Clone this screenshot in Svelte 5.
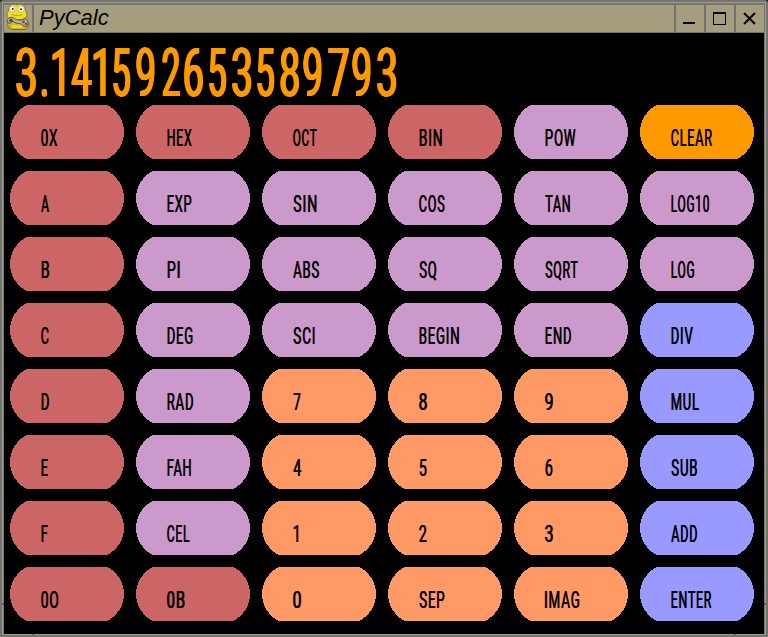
<script>
  // each glyph of the readout with its left edge and width on the display
  const readout = [
    ['3', 17.2, 18.8], ['.', 42.2, 5.2], ['1', 53, 11.5], ['4', 72.1, 19.6], ['1', 94.1, 11.7],
    ['5', 114, 16.2], ['9', 136.8, 17.5], ['2', 162.6, 16.6], ['6', 185, 17.8], ['5', 209.8, 16.2],
    ['3', 233.3, 18.2], ['5', 258, 16.2], ['8', 281.5, 18.2], ['9', 304.3, 17.5], ['7', 329, 19.3],
    ['9', 352.8, 17.5], ['3', 377.8, 18.2],
  ];

  // label, colour, label width
  const keys = [
    ['0X', 'red', 17], ['HEX', 'red', 25], ['OCT', 'red', 24], ['BIN', 'red', 23], ['POW', 'lilac', 31], ['CLEAR', 'amber', 41.5],
    ['A', 'red', 8.5], ['EXP', 'lilac', 24.5], ['SIN', 'lilac', 23.5], ['COS', 'lilac', 26], ['TAN', 'lilac', 25], ['LOG10', 'lilac', 38],
    ['B', 'red', 8.5], ['PI', 'lilac', 13], ['ABS', 'lilac', 26.5], ['SQ', 'lilac', 17.5], ['SQRT', 'lilac', 33], ['LOG', 'lilac', 23.5],
    ['C', 'red', 8], ['DEG', 'lilac', 26], ['SCI', 'lilac', 22], ['BEGIN', 'lilac', 40], ['END', 'lilac', 26.5], ['DIV', 'blue', 22],
    ['D', 'red', 8.5], ['RAD', 'lilac', 26.5], ['7', 'peach', 8], ['8', 'peach', 8], ['9', 'peach', 8], ['MUL', 'blue', 28.5],
    ['E', 'red', 7], ['FAH', 'lilac', 24], ['4', 'peach', 8.5], ['5', 'peach', 8], ['6', 'peach', 8], ['SUB', 'blue', 26.5],
    ['F', 'red', 7], ['CEL', 'lilac', 23], ['1', 'peach', 5.5], ['2', 'peach', 8], ['3', 'peach', 8], ['ADD', 'blue', 26.5],
    ['0O', 'red', 17.5], ['0B', 'red', 18], ['0', 'peach', 8], ['SEP', 'peach', 25.5], ['IMAG', 'peach', 34.5], ['ENTER', 'blue', 41],
  ];

  // squeeze a glyph run so that its ink starts at the left edge and fills the width
  function squeeze(node, width) {
    const ctx = document.createElement('canvas').getContext('2d');
    const style = getComputedStyle(node);
    ctx.font = `${style.fontWeight} ${style.fontSize} Roboto`;
    if (node.textContent.length > 1) ctx.letterSpacing = style.letterSpacing;
    const m = ctx.measureText(node.textContent);
    const ink = m.actualBoundingBoxRight + m.actualBoundingBoxLeft + 1;
    node.style.transform = `scaleX(${width / ink}) translateX(${m.actualBoundingBoxLeft}px)`;
  }
</script>

<div class="window">
  <header>
    <svg class="snake" width="28" height="27" viewBox="0 0 28 27">
      <path d="M6 13C2 17 3 25 8 25.500h12c4 0 6-5 3-8l-4-3z" fill="#cdb91d" stroke="#786b32" />
      <path d="M5 5c0-4 4-6 8-4 4-2 8 0 8 4l2 5c0 4-4 6-10 6S3 15 3 11c0-2 1-3 2-6z" fill="#f3dc20" stroke="#7d712c" stroke-width=".9" />
      <circle cx="8.300" cy="4.800" r="2.800" fill="#fff" stroke="#999" stroke-width=".5" /><circle cx="17.200" cy="5" r="3" fill="#fff" stroke="#999" stroke-width=".5" />
      <circle cx="8.800" cy="5" r="1" fill="#222" /><circle cx="17" cy="5.300" r="1" fill="#222" />
      <path d="M8 10.500c3 1.500 7 1.500 10 0" stroke="#b09a1a" fill="none" />
      <path d="M5 14c4-2 5 1 9 2s5-1 7-1c3 0 4.500 7 1.500 7.500-3 1-4-3-7-3s-4-1-6-2-3 3-5 1.500c-2-1-1.500-4 .5-5z" fill="#b5b5b0" stroke="#4d4d4d" />
      <path d="M5 16.500h4M7 14.500v4" stroke="#444" stroke-width="1.300" />
      <circle cx="19.500" cy="18" r="1.300" fill="#b82020" /><circle cx="22" cy="20" r="1.300" fill="#b82020" />
      <path d="M8 22.500h10" stroke="#f3dc20" stroke-width="2.500" />
    </svg>
    <h1>PyCalc</h1>
    <button aria-label="Minimize"><svg width="28" height="26" shape-rendering="crispEdges"><path d="M7 16h12v2H7z" /></svg></button>
    <button aria-label="Maximize"><svg width="28" height="26" shape-rendering="crispEdges"><path d="M7 6h13v13H7zM8 8v10h11V8z" fill-rule="evenodd" /></svg></button>
    <button aria-label="Close"><svg width="28" height="26"><path d="M8 7l11 11M19 7l-11 11" stroke="#000" stroke-width="2" /></svg></button>
  </header>
  <main>
    <div class="display">
      {#each readout as [glyph, left, width], i}
        <span class="cell" style:width="{(readout[i + 1]?.[1] ?? left + 24) - left}px"><span class="digit" use:squeeze={width}>{glyph}</span></span>
      {/each}
    </div>
    <div class="keys">
      {#each keys as [label, colour, width]}
        <button class="key {colour}">
          <svg width="114" height="54" shape-rendering="crispEdges"><rect y="-3" width="114" height="60" rx="30" /></svg>
          <span class="label" use:squeeze={width}>{label}</span>
        </button>
      {/each}
    </div>
  </main>
  <i class="notch left"></i><i class="notch right"></i><i class="notch sw"></i><i class="notch se"></i>
</div>

<style>
  :global(body) { margin: 0; background: #000; }
  button { border: 0; margin: 0; padding: 0; background: none; }
  .window {
    position: relative; box-sizing: border-box; width: 768px; height: 637px;
    background: #a59e7e; border: 2px solid #737373;
    border-radius: 3px 3px 0 0; padding: 1px;
    display: flex; flex-direction: column; overflow: hidden;
  }
  header {
    flex: none; height: 27px; display: flex; align-items: stretch;
    border: 1px solid #737373; border-top-width: 2px;
  }
  header .snake { display: block; flex: none; margin-top: -1px; }
  h1 {
    flex: 1; margin: 0; padding-left: 5px; border-left: 2px solid #737373;
    font: italic 400 22px/26px "Liberation Sans", Arial, sans-serif; color: #000;
  }
  header button { flex: none; width: 30px; box-sizing: border-box; border-left: 2px solid #737373; }
  header button svg { display: block; }
  main { flex: 1; background: #000; border: 1px solid #737373; border-width: 0 1px; }
  .display { display: flex; height: 72px; padding-left: 13.2px; }
  .cell { display: block; flex: none; }
  .digit {
    display: block; width: max-content; transform-origin: 0 0; letter-spacing: -10px;
    font: 400 67.5px/80px Roboto, "Liberation Sans", sans-serif; color: #ff9900;
    text-shadow: .9px 0 #ff9900, 1.800px 0 #ff9900, -.9px 0 #ff9900, -1.800px 0 #ff9900;
  }
  .keys { display: grid; grid-template-columns: repeat(6, 114px); gap: 12px; padding-left: 6px; }
  .key { position: relative; display: block; height: 54px; text-align: left; overflow: hidden; }
  .key svg { display: block; }
  .label {
    position: absolute; left: 31px; top: 19px; transform-origin: 0 0; white-space: nowrap;
    font: 400 23.500px/28px Roboto, "Liberation Sans", sans-serif; letter-spacing: 1.500px; color: #000;
    text-shadow: .9px 0 #000;
  }
  .notch { position: absolute; background: #55555c; }
  .left, .right { top: 601px; width: 2px; height: 2px; }
  .left { left: 0; }
  .right { right: 0; }
  .sw, .se { bottom: 0; width: 2px; height: 1px; }
  .sw { left: 30px; }
  .se { right: 30px; }
  .red rect { fill: #cc6666; }
  .lilac rect { fill: #cc99cc; }
  .amber rect { fill: #ff9900; }
  .peach rect { fill: #ff9966; }
  .blue rect { fill: #9999ff; }
</style>
